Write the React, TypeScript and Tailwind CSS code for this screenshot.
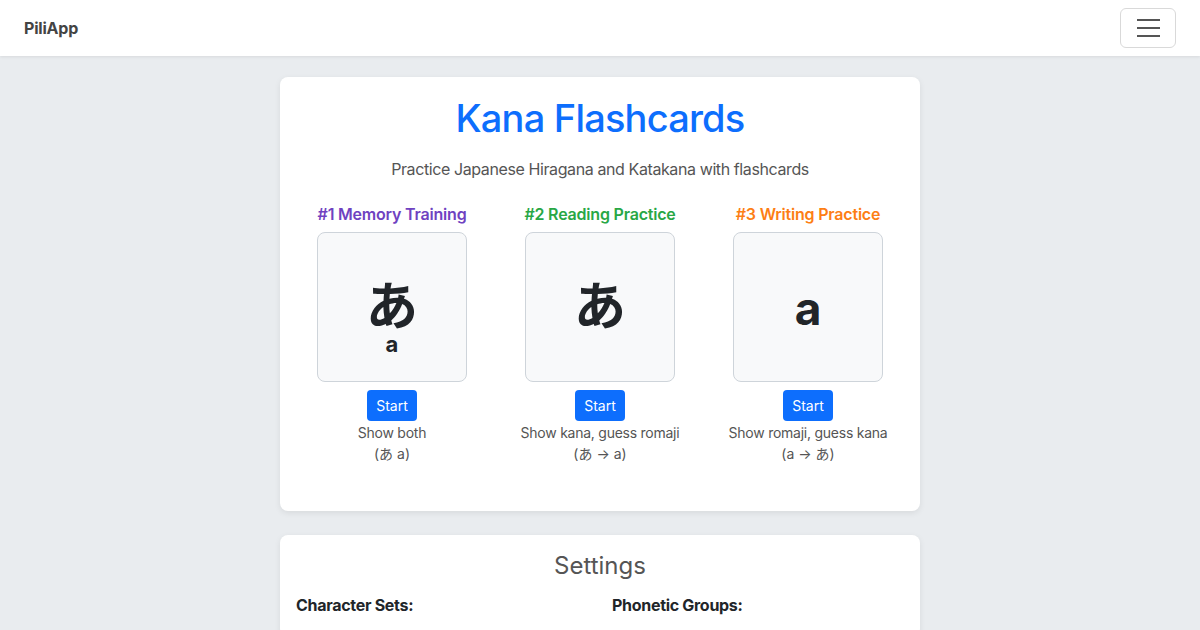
import React from "react";

const font = { fontFamily: "Inter, 'Noto Sans CJK JP', sans-serif" };

function Mode({
  title,
  color,
  children,
  desc,
  sub,
  top,
}: {
  title: string;
  color: string;
  children: React.ReactNode;
  desc: string;
  sub: string;
  top?: boolean;
}) {
  return (
    <div className="w-[200px] flex flex-col items-center">
      <div className={`text-[16px] font-semibold leading-[24px] tracking-[-0.2px] ${color}`}>{title}</div>
      <div
        className={`mt-[6px] w-[150px] h-[150px] rounded-[8px] border border-[#ced4da] bg-[#f8f9fa] flex flex-col items-center text-[#212529] ${
          top ? "justify-start pt-[49px]" : "justify-center"
        }`}
      >
        {children}
      </div>
      <button className="mt-[8px] h-[31px] px-[9px] rounded-[4px] bg-[#0d6efd] text-white text-[14px] leading-[20px]">
        Start
      </button>
      <div className="mt-[1px] text-[14px] leading-[21px] text-[#555] tracking-[-0.25px]">{desc}</div>
      <div className="text-[14px] leading-[21px] text-[#555]">{sub}</div>
    </div>
  );
}

export default function App() {
  return (
    <div className="min-h-[630px] bg-[#e9ecef] overflow-hidden" style={font}>
      <nav className="h-[56px] bg-white flex items-center justify-between pl-[24px] pr-[24px] shadow-[0_1px_3px_rgba(0,0,0,0.08)]">
        <span className="text-[16px] font-bold text-[#444] tracking-[-0.2px]">PiliApp</span>
        <button className="w-[56px] h-[40px] border border-[#d9d9d9] rounded-[6px] flex flex-col items-center justify-center gap-[6px]">
          <span className="block w-[23px] h-[2px] bg-[#555]" />
          <span className="block w-[23px] h-[2px] bg-[#555]" />
          <span className="block w-[23px] h-[2px] bg-[#555]" />
        </button>
      </nav>

      <div className="w-[640px] mx-auto mt-[21px] bg-white rounded-[8px] shadow-[0_2px_6px_rgba(0,0,0,0.08)] pt-[16px] pb-[47px] flex flex-col items-center">
        <h1 className="text-[38px] font-medium leading-[50px] text-[#0d6efd] tracking-[-0.8px]">Kana Flashcards</h1>
        <p className="mt-[14px] text-[16px] leading-[24px] text-[#555] tracking-[-0.4px]">
          Practice Japanese Hiragana and Katakana with flashcards
        </p>
        <div className="mt-[21px] flex justify-center gap-[8px]">
          <Mode title="#1 Memory Training" color="text-[#6f42c1]" desc="Show both" sub="(あ a)" top>
            <span className="text-[52px] font-bold leading-[50px]">あ</span>
            <span className="text-[22px] font-bold leading-[24px]">a</span>
          </Mode>
          <Mode title="#2 Reading Practice" color="text-[#28a745]" desc="Show kana, guess romaji" sub="(あ → a)">
            <span className="text-[52px] font-bold leading-[56px]">あ</span>
          </Mode>
          <Mode title="#3 Writing Practice" color="text-[#fd7e14]" desc="Show romaji, guess kana" sub="(a → あ)">
            <span className="text-[46px] font-bold leading-[52px] mt-[2px]">a</span>
          </Mode>
        </div>
      </div>

      <div className="w-[640px] mx-auto mt-[24px] bg-white rounded-[8px] shadow-[0_2px_6px_rgba(0,0,0,0.08)] pt-[16px] px-[16px] pb-[20px]">
        <h2 className="text-center text-[24px] leading-[30px] text-[#555]">Settings</h2>
        <div className="mt-[12px] grid grid-cols-[316px_1fr]">
          <div className="text-[16px] font-bold text-[#212529] tracking-[-0.3px]">Character Sets:</div>
          <div className="text-[16px] font-bold text-[#212529] tracking-[-0.3px]">Phonetic Groups:</div>
        </div>
      </div>
    </div>
  );
}
